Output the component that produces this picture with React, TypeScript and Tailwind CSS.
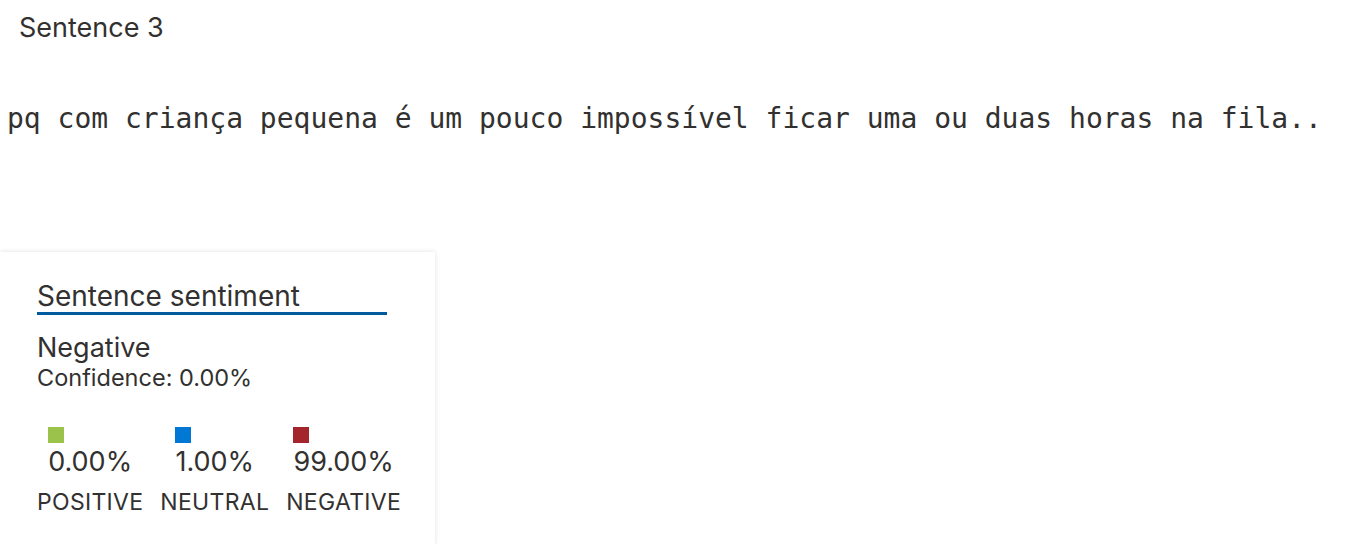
import React from 'react';

const scores = [
  { label: 'POSITIVE', value: '0.00%', color: 'bg-[#9bc24a]' },
  { label: 'NEUTRAL', value: '1.00%', color: 'bg-[#0078d4]' },
  { label: 'NEGATIVE', value: '99.00%', color: 'bg-[#a4262c]' },
];

export default function App() {
  return (
    <div className="h-[544px] bg-white text-[#323130] overflow-hidden">
      <div className="pl-[19px] pt-[12px] text-[27px] leading-[32px] font-['Inter',sans-serif]">
        Sentence 3
      </div>

      <div className="mt-[58px] pl-[7px] text-[28px] leading-[34px] font-['DejaVu_Sans_Mono',monospace]">
        pq com criança pequena é um pouco impossível ficar uma ou duas horas na fila..
      </div>

      <div className="mt-[116px] w-[435px] h-[293px] bg-white shadow-[0_0_5px_rgba(0,0,0,0.12)] pl-[37px] pt-[28px] font-['Inter',sans-serif]">
        <div className="w-[350px] border-b-[3px] border-[#005a9e] text-[28px] leading-[32px]">
          Sentence sentiment
        </div>
        <div className="mt-[18px] text-[27px] leading-[30px]">Negative</div>
        <div className="mt-[2px] text-[23.5px] leading-[26px]">Confidence: 0.00%</div>

        <div className="mt-[36px] flex gap-[17px]">
          {scores.map(s => (
            <div key={s.label} className="flex flex-col items-center">
              <div className="flex flex-col items-start">
                <div className={`w-[16px] h-[16px] ${s.color}`} />
                <div className="mt-[4px] text-[27px] leading-[30px]">{s.value}</div>
              </div>
              <div className="mt-[12px] text-[23px] leading-[26px] tracking-[0.3px]">{s.label}</div>
            </div>
          ))}
        </div>
      </div>
    </div>
  );
}
